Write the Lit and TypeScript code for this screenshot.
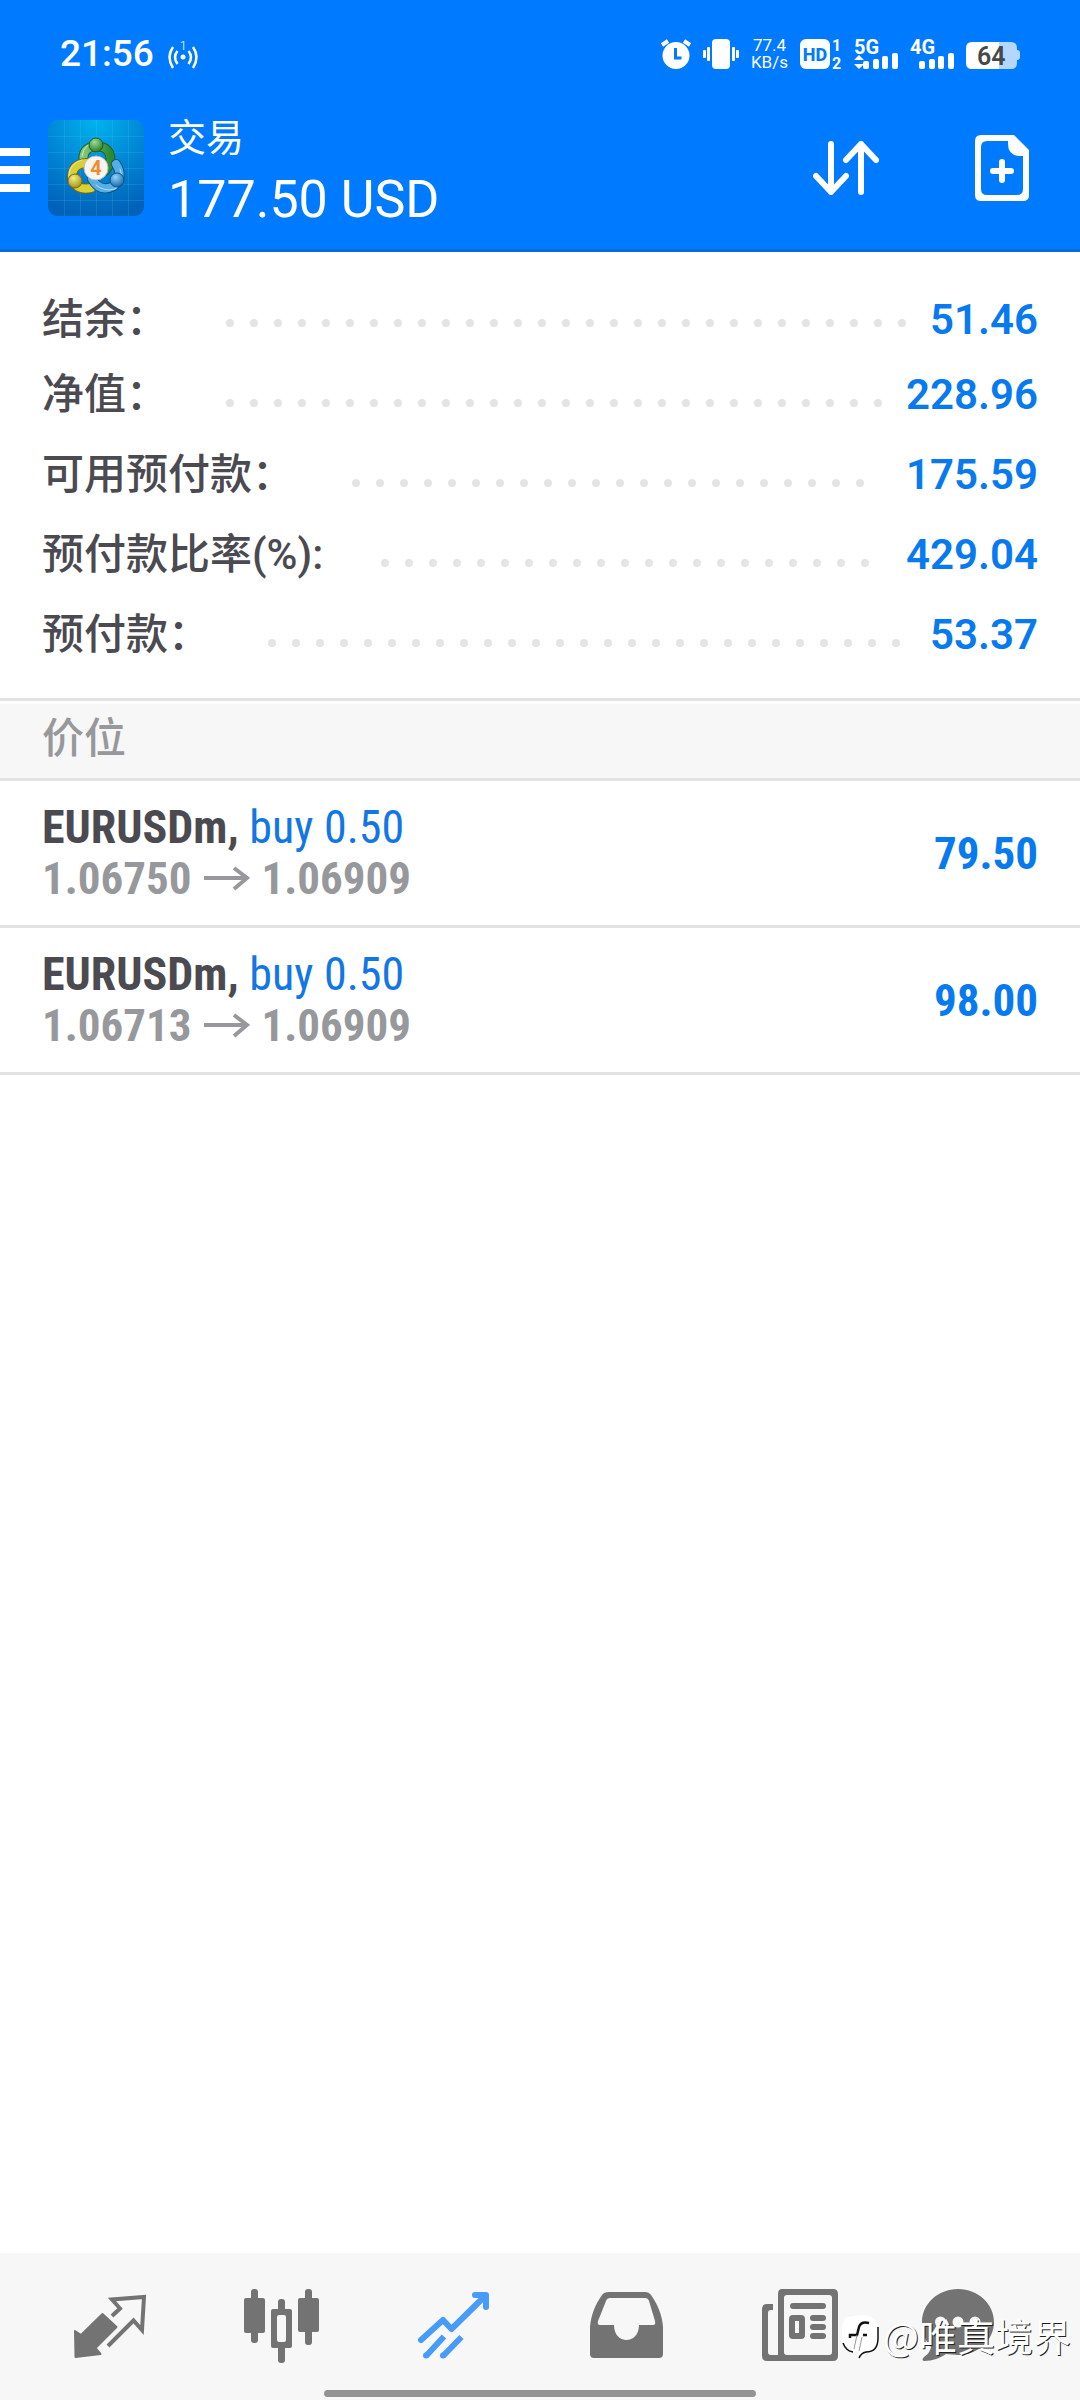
import { LitElement, html, css, svg } from "lit";
import { customElement } from "lit/decorators.js";

const tabs = [
  {
    label: "行情",
    icon: svg`<path fill="currentColor" stroke="currentColor" stroke-width="2" stroke-linejoin="round" d="M13 54l6 4 21.500-21 14 13-21 21 5 6-25 3z"/>
      <path fill="none" stroke="currentColor" stroke-width="4" d="M50 39l8-7.500L50 22.500 82 20l-2 33-8.500-9.500L46 69"/>`,
  },
  {
    label: "图表",
    icon: svg`<g fill="currentColor"><rect x="17" y="12" width="7" height="54" rx="3"/><rect x="10" y="21" width="21" height="35" rx="2"/>
      <rect x="71" y="12" width="7" height="56" rx="3"/><rect x="64" y="21" width="21" height="34" rx="2"/>
      <rect x="44" y="22" width="7" height="12" rx="3"/><rect x="44" y="66" width="7" height="20" rx="3"/>
      <path fill-rule="evenodd" d="M39 32h17q2 0 2 2v35q0 2-2 2H39q-2 0-2-2V34q0-2 2-2zm6 6q-2 0-2 2v23q0 2 2 2h5q2 0 2-2V40q0-2-2-2z"/></g>`,
  },
  {
    label: "交易",
    active: true,
    icon: svg`<g fill="none" stroke="currentColor" stroke-width="6" stroke-linejoin="round">
      <path stroke-linecap="round" d="M15 63l22-20 8.500 9L79 19M69 18h11v12"/>
      <path d="M20 79l18-19.500M37 79l18.500-19"/></g>
      <g fill="currentColor"><circle cx="20" cy="78.500" r="3"/><circle cx="37" cy="78.500" r="3"/></g>`,
  },
  {
    label: "历史",
    icon: svg`<path fill="currentColor" fill-rule="evenodd" d="M31 15h36q4 0 6 3c7 10 11 20 12 32v27q0 4-4 4H16q-4 0-4-4V50c1-12 5-22 12-32q2-3 7-3zm1 6q-3 0-4 3l-8 20q-1 4 2 4h14c0 20 25 20 25 0h14q3 0 2-4l-6-20q-1-3-4-3z"/>`,
  },
  {
    label: "新闻",
    icon: svg`<path fill="currentColor" fill-rule="evenodd" d="M32 12h51q5 0 5 5v62q0 5-5 5H17q-5 0-5-5V32q0-5 5-5h6v6h-2q-3 0-3 3v39q0 3 3 3h7V17q0-5 4-5zm5 6q-3 0-3 3v54q0 3 3 3h42q3 0 3-3V21q0-3-3-3z"/>
      <g fill="currentColor"><rect x="40" y="26" width="36" height="6" rx="3"/><rect x="60" y="38" width="16" height="6" rx="3"/><rect x="60" y="47" width="16" height="6" rx="3"/><rect x="60" y="56" width="16" height="6" rx="3"/></g>
      <rect x="42" y="41" width="10" height="18" rx="1" fill="none" stroke="currentColor" stroke-width="6"/>`,
  },
  {
    label: "信息",
    icon: svg`<path fill="currentColor" d="M36 12c20 0 36 15 36 33S56 78 36 78c-4 0-8-1-12-1-6 4-13 7-22 7q-3-1 0-4 6-4 7-10C3 64 0 55 0 45c0-18 16-33 36-33z"/>
      <g class="hole"><circle cx="18.500" cy="45" r="5.500"/><circle cx="36" cy="45" r="5.500"/><circle cx="53" cy="45" r="5.500"/></g>`,
  },
];

const balances = [
  ["结余：", "51.46"],
  ["净值：", "228.96"],
  ["可用预付款：", "175.59"],
  ["预付款比率(%):", "429.04"],
  ["预付款：", "53.37"],
];

const positions = [
  { symbol: "EURUSDm,", side: "buy 0.50", open: "1.06750", now: "1.06909", profit: "79.50" },
  { symbol: "EURUSDm,", side: "buy 0.50", open: "1.06713", now: "1.06909", profit: "98.00" },
];

@customElement("status-bar")
class StatusBar extends LitElement {
  static styles = css`
    :host { display: flex; align-items: center; justify-content: space-between; height: 64px; padding: 22px 60px 0; color: #fff; font-family: Roboto, "Liberation Sans", sans-serif; }
    .left, .right { display: flex; align-items: center; }
    .left { gap: 14px; }
    .right { gap: 12px; }
    .time { font-size: 37px; line-height: 40px; font-weight: 500; }
    svg { display: block; overflow: visible; }
    .rate { font-size: 17px; line-height: 17px; text-align: center; }
    .battery-text { fill: #484848; font-size: 25px; font-weight: 600; }
    .small { font-size: 20px; font-weight: 700; fill: #fff; }
    .mini { font-size: 16px; font-weight: 700; fill: #fff; }
    .hd { font-size: 18px; font-weight: 800; fill: #007aff; }
    .one { font-size: 13px; font-weight: 300; fill: #fff; }
  `;
  signal(name: string, arrows: boolean) {
    return svg`<text class="small" x="0" y="15">${name}</text>
      ${arrows ? svg`<path fill="#fff" d="M0 21l5-5 5 5zM0 25h10l-5 5z"/>` : ""}
      <g fill="#fff"><rect x="9" y="22" width="6" height="8" rx="2"/><rect x="19" y="20" width="6" height="10" rx="2"/><rect x="28" y="17" width="6" height="13" rx="2"/><rect x="38" y="14" width="6" height="16" rx="2"/></g>`;
  }
  render() {
    return html`
      <div class="left">
        <span class="time">21:56</span>
        <svg width="30" height="30" viewBox="0 0 30 30" aria-hidden="true">
          <text class="one" x="15" y="11" text-anchor="middle">1</text><circle cx="15" cy="18" r="2.500" fill="#fff"/>
          <g fill="none" stroke="#fff" stroke-width="2.500"><path d="M5 8q-7 10 0 21M9.500 12q-5 6 0 13M25 8q7 10 0 21M20.500 12q5 6 0 13"/></g>
        </svg>
      </div>
      <div class="right">
        <svg width="30" height="30" viewBox="0 0 30 30" aria-hidden="true"><circle cx="15" cy="16.500" r="13.500" fill="#fff"/><path d="M1 6l6-4M29 6l-6-4" stroke="#fff" stroke-width="4"/><path d="M14.500 9v10h6" fill="none" stroke="#007aff" stroke-width="3"/></svg>
        <svg width="36" height="30" viewBox="0 0 36 30" aria-hidden="true"><g fill="#fff"><rect x="9" width="18" height="30" rx="4"/><rect y="11" width="3" height="8" rx="1"/><rect x="4" y="8" width="3" height="14" rx="1"/><rect x="29" y="8" width="3" height="14" rx="1"/><rect x="33" y="11" width="3" height="8" rx="1"/></g></svg>
        <div class="rate">77.4<br>KB/s</div>
        <svg width="42" height="30" viewBox="0 0 42 30"><rect width="30" height="30" rx="6" fill="#fff"/><text class="hd" x="15" y="22" text-anchor="middle">HD</text><text class="mini" x="32" y="12">1</text><text class="mini" x="32" y="30">2</text></svg>
        <svg width="44" height="30" viewBox="0 0 44 30">${this.signal("5G", true)}</svg>
        <svg width="44" height="30" viewBox="0 0 44 30">${this.signal("4G", false)}</svg>
        <svg width="54" height="30" viewBox="0 0 54 30"><path fill="#b3d7ff" d="M33 3h12q6 0 6 6v2q3 0 3 3v4q0 3-3 3v3q0 6-6 6H33z"/><path fill="#fff" d="M33 3H6Q0 3 0 9v15q0 6 6 6h27z"/><text class="battery-text" x="11" y="26">64</text></svg>
      </div>`;
  }
}

@customElement("app-header")
class AppHeader extends LitElement {
  static styles = css`
    :host { display: flex; align-items: center; height: 163px; border-bottom: 3px solid #0a6bdc; font-family: Roboto, "Noto Sans CJK SC", sans-serif; color: #fff; }
    button { appearance: none; border: 0; padding: 0; margin: 0; background: none; color: inherit; display: block; }
    svg { display: block; }
    .menu { padding-top: 4px; }
    .logo { margin-left: 18px; border-radius: 9px; }
    .titles { flex: 1; margin-left: 24px; padding-top: 8px; }
    .title { margin: 0; font-size: 38px; line-height: 56px; font-weight: 400; }
    .amount { font-size: 52px; line-height: 68px; }
    .actions { display: flex; gap: 96px; margin-right: 51px; align-items: center; }
    .four { font-size: 20px; font-weight: 700; fill: #f28b30; }
  `;
  render() {
    return html`
      <button class="menu" aria-label="菜单"><svg width="30" height="44" viewBox="0 0 30 44"><path fill="#fff" d="M0 0h30v8H0zM0 18h30v8H0zM0 36h30v8H0z"/></svg></button>
      <svg class="logo" width="96" height="96" viewBox="0 0 96 96" aria-hidden="true">
        <defs>
          <radialGradient id="bg" cx=".5" cy="0" r="1"><stop offset="0" stop-color="#00b4ee"/><stop offset=".5" stop-color="#0088d6"/><stop offset="1" stop-color="#0062b8"/></radialGradient>
          <radialGradient id="g" cx=".4" cy=".3" r=".8"><stop offset="0" stop-color="#a0dc90"/><stop offset="1" stop-color="#16701f"/></radialGradient>
          <radialGradient id="y" cx=".4" cy=".3" r=".8"><stop offset="0" stop-color="#f4ee86"/><stop offset="1" stop-color="#97860e"/></radialGradient>
          <radialGradient id="b" cx=".4" cy=".3" r=".8"><stop offset="0" stop-color="#90d4f8"/><stop offset="1" stop-color="#0a5ca4"/></radialGradient>
          <linearGradient id="gs" x2="1"><stop offset="0" stop-color="#86c872"/><stop offset="1" stop-color="#2b8a34"/></linearGradient>
        </defs>
        <rect width="96" height="96" fill="url(#bg)"/>
        <path stroke="#7cc8f4" stroke-opacity=".16" d="M16.500 0v96M32.500 0v96M48.500 0v96M64.500 0v96M80.500 0v96M0 16.500h96M0 32.500h96M0 48.500h96M0 64.500h96M0 80.500h96"/>
        <g fill="none" stroke-linecap="round">
          <path stroke="#245c2a" stroke-width="10" d="M36 42q-3-14 12-16 17 1 14 18l-5 7"/><path stroke="url(#gs)" stroke-width="8" d="M36 42q-3-14 12-16 17 1 14 18l-5 7"/>
          <path stroke="#6f6a16" stroke-width="10" d="M38 43q-15 1-14 16 5 12 19 9"/><path stroke="#d9d036" stroke-width="8" d="M38 43q-15 1-14 16 5 12 19 9"/>
          <path stroke="#115386" stroke-width="10" d="M68 44q8 12-2 22-14 7-22-7"/><path stroke="#55aee4" stroke-width="8" d="M68 44q8 12-2 22-14 7-22-7"/>
          <path stroke="#d7f3ff" stroke-opacity=".7" stroke-width="1" d="M34 36q2-13 15-14M21 55q1-12 13-15M72 49q5 11-5 20-11 3-19-4"/>
        </g>
        <circle cx="48" cy="25" r="7" fill="url(#g)" stroke="#1f5f22"/><circle cx="27" cy="61" r="7" fill="url(#y)" stroke="#77690e"/><circle cx="69" cy="60" r="7" fill="url(#b)" stroke="#114f85"/>
        <circle cx="48" cy="48" r="12" fill="#f7f5f2" stroke="#b9bdb8"/>
        <text class="four" x="48" y="55" text-anchor="middle">4</text>
      </svg>
      <div class="titles"><h1 class="title">交易</h1><div class="amount">177.50 USD</div></div>
      <div class="actions">
        <button aria-label="排序"><svg width="66" height="54" viewBox="0 0 66 54"><path fill="none" stroke="#fff" stroke-width="6" stroke-linecap="round" stroke-linejoin="round" d="M18 3v48M3 35l15 16 15-16M48 51V3M33 19L48 3l15 16"/></svg></button>
        <button aria-label="新订单"><svg width="54" height="66" viewBox="0 0 54 66"><path fill="#fff" fill-rule="evenodd" d="M6 0h33l15 15v45q0 6-6 6H6q-6 0-6-6V6q0-6 6-6zm6 6q-6 0-6 6v42q0 6 6 6h30q6 0 6-6V21h-4q-11-1-11-12V6z"/><path stroke="#fff" stroke-width="6" stroke-linecap="round" d="M18 36h18M27 27v18"/></svg></button>
      </div>`;
  }
}

@customElement("account-summary")
class AccountSummary extends LitElement {
  static styles = css`
    :host { display: block; padding: 23px 42px; border-bottom: 3px solid #e3e3e3; font-family: Roboto, "Noto Sans CJK SC", sans-serif; font-size: 42px; line-height: 50px; font-weight: 500; }
    dl { margin: 0; }
    .row { display: flex; align-items: center; height: 80px; }
    dt { color: #4b4a50; white-space: nowrap; }
    dd { margin: 0; color: #087af0; font-weight: 600; }
    .row:first-child dt, .row:first-child dd { padding-top: 10px; }
    .leader { flex: 1; display: flex; flex-wrap: wrap; gap: 16px; height: 8px; margin: 16px 24px 0 58px; overflow: hidden; }
    .dot { width: 8px; height: 8px; border-radius: 50%; background: #e4e4e4; }
  `;
  render() {
    return html`<dl>${balances.map(([label, value]) => html`
      <div class="row"><dt>${label}</dt><div class="leader" aria-hidden="true">${Array.from({ length: 60 }, () => html`<i class="dot"></i>`)}</div><dd>${value}</dd></div>`)}</dl>`;
  }
}

@customElement("position-list")
class PositionList extends LitElement {
  static styles = css`
    :host { display: block; padding-top: 3px; }
    h2 { margin: 0; padding: 5px 42px 9px; background: #f7f7f7; color: #97989c; border-bottom: 3px solid #e3e3e3; font: 500 42px/60px Roboto, "Noto Sans CJK SC", sans-serif; }
    ul { list-style: none; margin: 0; padding: 0; }
    .position { display: flex; align-items: center; justify-content: space-between; height: 144px; padding: 0 42px; border-bottom: 3px solid #e3e3e3; font: 700 46px/51px "Roboto Condensed", "Liberation Sans Narrow", "Liberation Sans", sans-serif; }
    .symbol { color: #4b4a50; }
    .side { color: #1277e4; font-weight: 400; }
    .prices { display: flex; align-items: center; gap: 12px; color: #97989c; font-size: 45px; }
    .profit { color: #087af0; font-size: 45px; }
  `;
  render() {
    return html`<h2>价位</h2><ul>${positions.map((p) => html`
      <li class="position"><div><div><span class="symbol">${p.symbol}</span> <span class="side">${p.side}</span></div>
      <div class="prices"><span>${p.open}</span><svg width="46" height="26" viewBox="0 0 46 26" aria-hidden="true"><path fill="none" stroke="currentColor" stroke-width="4" d="M0 12h43M30 2l13 10-13 11"/></svg><span>${p.now}</span></div></div>
      <span class="profit">${p.profit}</span></li>`)}</ul>`;
  }
}

@customElement("tab-bar")
class TabBar extends LitElement {
  static styles = css`
    :host { display: block; position: relative; background: #f7f7f7; padding: 0 24px 3px; }
    nav { display: grid; grid-template-columns: repeat(6, 1fr); height: 144px; }
    .tab { appearance: none; border: 0; padding: 0; background: none; display: flex; align-items: center; justify-content: center; color: #737373; }
    .active { color: #479bf9; }
    .hole { fill: #f7f7f7; }
    .home { position: absolute; left: 30%; right: 30%; bottom: 3px; height: 7px; border-radius: 4px; background: #939393; }
    .mark { position: absolute; right: 9px; bottom: 35px; display: flex; align-items: center; gap: 2px; color: #fff; font: 400 38px/56px "Noto Sans CJK SC", sans-serif; text-shadow: 1px 1px 0 #222; pointer-events: none; }
    .mark svg { margin-top: 4px; }
    .mark span { margin-bottom: 2px; }
  `;
  render() {
    return html`<nav>${tabs.map((t) => html`
      <button class=${t.active ? "tab active" : "tab"} aria-label=${t.label}><svg width="96" height="96" viewBox="0 0 96 96">${t.icon}</svg></button>`)}</nav>
      <div class="home"></div>
      <div class="mark"><svg width="39" height="46" viewBox="0 0 39 46" aria-hidden="true">
        <path fill="#fff" d="M12 1c12-2 24 0 24 13v8c0 11-5 15-12 15q-5 1-7 6-2-2-1-6C6 37 0 33 0 24v-9C0 5 4 1 12 1z"/>
        <path fill="none" stroke="#111" stroke-width="1.500" d="M36 12v11c0 10-5 14-12 14q-5 1-7 6M1 28q3 8 10 9"/>
        <path fill="none" stroke="#111" stroke-width="2.500" d="M27 8q-8-2-10 4l-2 8H8v3M21 20h4"/>
        <path fill="none" stroke="#999" stroke-width="1" d="M15 20l-3 14M20 22l-3 14"/></svg><span>@唯真境界</span></div>`;
  }
}

@customElement("app-root")
class AppRoot extends LitElement {
  static styles = css`
    :host { display: flex; flex-direction: column; min-height: 100vh; background: #fff; }
    .top { background: #007aff; }
    main { flex: 1; }
  `;
  render() {
    return html`<div class="top"><status-bar></status-bar><app-header></app-header></div>
      <main><account-summary></account-summary><position-list></position-list></main>
      <tab-bar></tab-bar>`;
  }
}
